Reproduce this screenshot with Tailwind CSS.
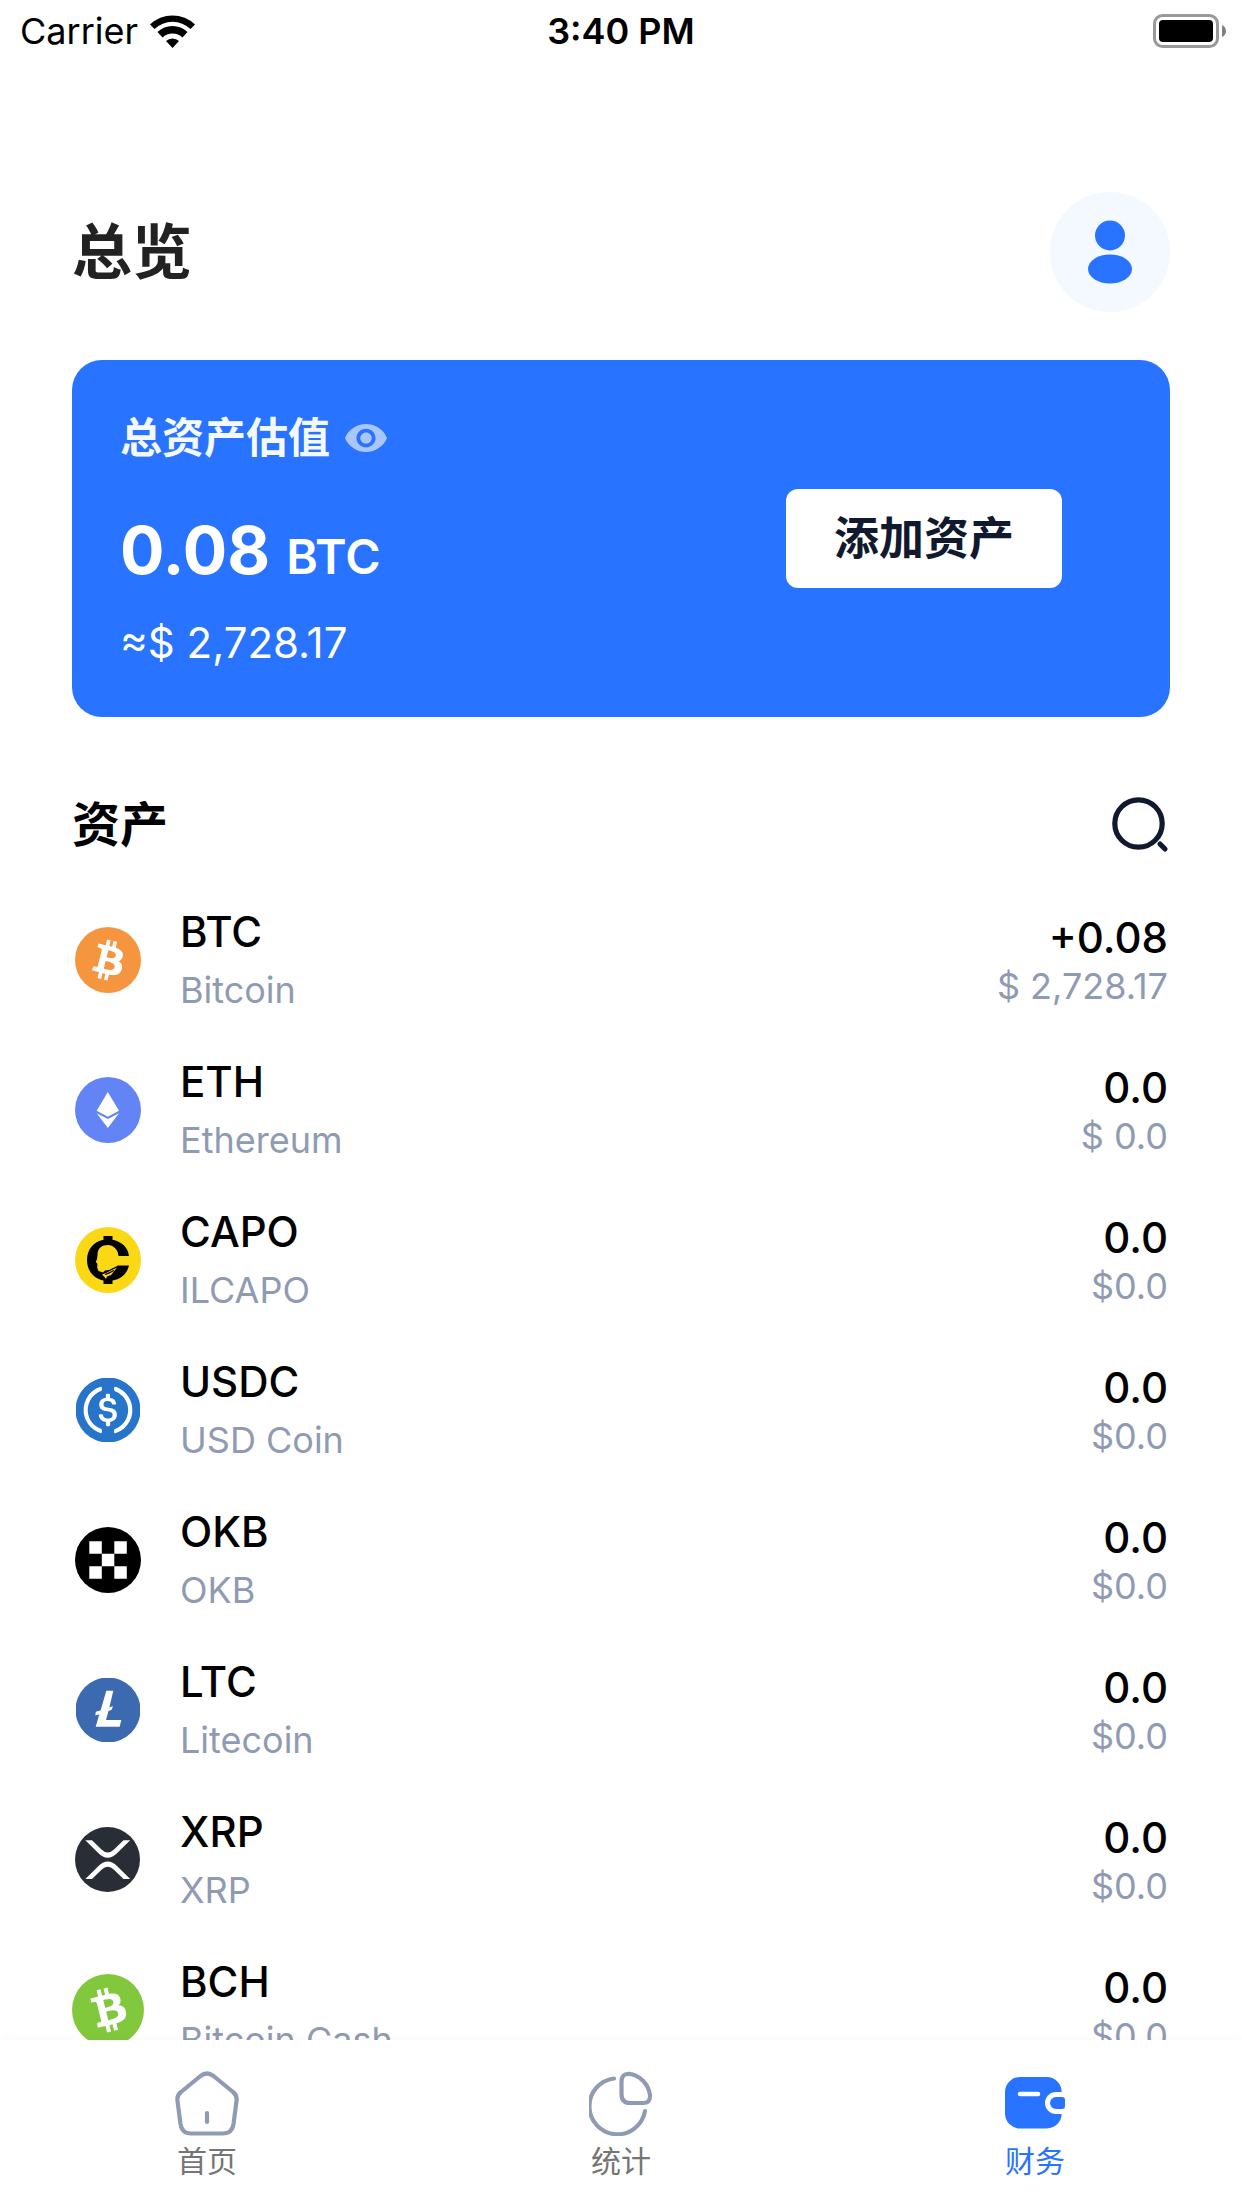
<!DOCTYPE html>
<html lang="zh-CN">
<head>
<meta charset="utf-8">
<meta name="viewport" content="width=device-width, initial-scale=1">
<title>总览</title>
<script src="https://cdn.jsdelivr.net/npm/@tailwindcss/browser@4"></script>
</head>
<body class="flex h-screen flex-col bg-white font-[Inter,'Noto_Sans_CJK_SC',sans-serif] text-black">

<!-- Status bar -->
<div class="grid h-[60px] shrink-0 grid-cols-3 items-center px-5 pt-0.5 text-4xl">
  <div class="flex items-center gap-3">
    <span>Carrier</span>
    <svg class="h-[33px] w-[45px]" viewBox="0 0 45 33" aria-hidden="true">
      <path d="M0 9.500A32.500 32.500 0 0 1 45 9.500L40.500 14A26 26 0 0 0 4.500 14Z"/>
      <path d="M7.500 17A21.500 21.500 0 0 1 37.500 17L32.500 22.500A14.500 14.500 0 0 0 12.500 22.500Z"/>
      <path d="M16 26A9.500 9.500 0 0 1 29 26L22.500 33Z"/>
    </svg>
  </div>
  <div class="text-center font-semibold">3:40 PM</div>
  <svg class="-mr-1 h-[34px] w-[73px] justify-self-end" viewBox="0 0 73 34" aria-hidden="true">
    <rect x="1.500" y="1.500" width="63" height="31" rx="8" fill="none" stroke="#999" stroke-width="3"/>
    <rect x="6" y="6" width="54" height="22" rx="4"/>
    <path d="M69 11Q73 13 73 17T69 23Z" fill="#808080"/>
  </svg>
</div>

<main class="min-h-0 flex-1 overflow-y-auto px-18 pt-33 [scrollbar-width:none]">
  <header class="flex items-center justify-between">
    <h1 class="text-6xl font-semibold text-[#222]">总览</h1>
    <button type="button" aria-label="个人中心" class="grid size-30 place-items-center rounded-full bg-[#f4f8ff]">
      <svg class="h-16 w-11" viewBox="0 0 44 64" fill="#2873ff" aria-hidden="true">
        <circle cx="22" cy="15.500" r="15"/>
        <ellipse cx="22" cy="49" rx="22" ry="14.500"/>
      </svg>
    </button>
  </header>

  <section class="mt-12 flex items-center justify-between rounded-[30px] bg-[#2873ff] py-12 pr-27 pl-12 text-white">
    <div>
      <div class="flex items-center gap-[15px]">
        <h2 class="text-[42px] leading-[60px] font-semibold text-[#f4f8ff]">总资产估值</h2>
        <button type="button" aria-label="隐藏资产">
          <svg class="h-7 w-[42px]" viewBox="1 4.500 22 15" preserveAspectRatio="none" fill="#a9c7ff" aria-hidden="true">
            <path d="M12 4.500C7 4.500 2.730 7.610 1 12c1.730 4.390 6 7.500 11 7.500s9.270-3.110 11-7.500c-1.730-4.390-6-7.500-11-7.500zM12 17c-2.760 0-5-2.240-5-5s2.240-5 5-5 5 2.240 5 5-2.240 5-5 5zm0-8c-1.660 0-3 1.340-3 3s1.340 3 3 3 3-1.340 3-3-1.340-3-3-3z"/>
          </svg>
        </button>
      </div>
      <p class="mt-10 flex items-baseline gap-4 font-semibold">
        <span class="text-[66px] leading-[84px] font-bold">0.08</span>
        <span class="text-5xl">BTC</span>
      </p>
      <p class="mt-6 text-[42px] leading-[53px]">≈$ 2,728.17</p>
    </div>
    <button type="button" class="rounded-xl bg-white px-12 py-5 text-[45px] leading-[59px] font-semibold text-[#11192e]">添加资产</button>
  </section>

  <section class="mt-12">
    <div class="flex h-30 items-center justify-between">
      <h2 class="text-5xl font-semibold">资产</h2>
      <button type="button" aria-label="搜索">
        <svg class="h-14 w-[58px]" viewBox="0 0 58 56" fill="none" stroke="#11192e" stroke-width="5.200" stroke-linecap="round" aria-hidden="true">
          <circle cx="26.500" cy="26.500" r="23.700"/>
          <path d="M48 47L53 52"/>
        </svg>
      </button>
    </div>

    <ul>
      <li class="flex h-[150px] items-center">
        <svg class="mx-[3px] size-[66px]" viewBox="0 0 32 32" aria-hidden="true">
          <circle cx="16" cy="16" r="16" fill="#f69540"/>
          <path fill="#fff" d="M23.189 14.020c.314-2.096-1.283-3.223-3.465-3.975l.708-2.840-1.728-.430-.690 2.765c-.454-.114-.920-.220-1.385-.326l.695-2.783L15.596 6l-.708 2.839c-.376-.086-.746-.170-1.104-.260l.002-.009-2.384-.595-.460 1.846s1.283.294 1.256.312c.700.175.826.638.805 1.006l-.806 3.235c.048.012.110.030.180.057l-.183-.045-1.130 4.532c-.086.212-.303.531-.793.410.018.025-1.256-.313-1.256-.313l-.858 1.978 2.250.561c.418.105.828.215 1.231.318l-.715 2.872 1.727.430.708-2.840c.472.127.930.245 1.378.357l-.706 2.828 1.728.430.715-2.866c2.948.558 5.164.333 6.097-2.333.752-2.146-.037-3.385-1.588-4.192 1.130-.260 1.980-1.003 2.207-2.538zm-3.950 5.538c-.533 2.147-4.148.986-5.320.695l.950-3.805c1.172.293 4.929.872 4.370 3.110zm.535-5.569c-.487 1.953-3.495.960-4.470.717l.860-3.450c.975.243 4.118.696 3.610 2.733z"/>
        </svg>
        <div class="ml-9 flex-1">
          <h3 class="text-[42px] leading-[60px] font-medium">BTC</h3>
          <p class="text-4xl leading-[56px] text-[#8f9bb3]">Bitcoin</p>
        </div>
        <div class="pt-1 pr-0.5 text-right">
          <p class="text-[42px] leading-[48px] font-medium">+0.08</p>
          <p class="text-4xl leading-[48px] text-[#8f9bb3]">$ 2,728.17</p>
        </div>
      </li>

      <li class="flex h-[150px] items-center">
        <svg class="mx-[3px] size-[66px]" viewBox="0 0 66 66" aria-hidden="true">
          <circle cx="33" cy="33" r="33" fill="#6284f5"/>
          <path fill="#fff" d="M32.800 15L44 33.700 32.800 39.700 21.700 33.700ZM21.700 36.300L32.800 41.900 44 36.300 32.800 51Z"/>
        </svg>
        <div class="ml-9 flex-1">
          <h3 class="text-[42px] leading-[60px] font-medium">ETH</h3>
          <p class="text-4xl leading-[56px] text-[#8f9bb3]">Ethereum</p>
        </div>
        <div class="pt-1 pr-0.5 text-right">
          <p class="text-[42px] leading-[48px] font-medium">0.0</p>
          <p class="text-4xl leading-[48px] text-[#8f9bb3]">$ 0.0</p>
        </div>
      </li>

      <li class="flex h-[150px] items-center">
        <svg class="mx-[3px] size-[66px]" viewBox="0 0 66 66" aria-hidden="true">
          <circle cx="33" cy="33" r="33" fill="#fad816"/>
          <path d="M28.500 9H37.500V12.800C46 14.500 53 20 54 29H43.500C43 22 38 18 33 18C27 18 22.500 21 22.500 28L22 32 20.800 35 22.300 36.500V41L23.500 44 28 45.500 30 43.500 34 43 43 38.500H54C52 47 46 52 37.500 53.500V57H28.500V53.500C18 51.500 12 43 12 33S18.500 14.500 28.500 12.800Z"/>
          <path fill="#fad816" d="M27 47.500L31 46 42 40.500 36 48 32 49.500 31 52 29.500 50Z"/>
          <path d="M30 47.500L39 43.500 33.500 46.500Z" stroke="#000" stroke-width=".8"/>
        </svg>
        <div class="ml-9 flex-1">
          <h3 class="text-[42px] leading-[60px] font-medium">CAPO</h3>
          <p class="text-4xl leading-[56px] text-[#8f9bb3]">ILCAPO</p>
        </div>
        <div class="pt-1 pr-0.5 text-right">
          <p class="text-[42px] leading-[48px] font-medium">0.0</p>
          <p class="text-4xl leading-[48px] text-[#8f9bb3]">$0.0</p>
        </div>
      </li>

      <li class="flex h-[150px] items-center">
        <svg class="mx-1 size-16" viewBox="1 1 64 64" aria-hidden="true">
          <circle cx="33" cy="33" r="32.500" fill="#2775ca"/>
          <path fill="#fff" transform="translate(33 33) scale(2.220) translate(-16 -16)" d="M20.022 18.124c0-2.124-1.280-2.852-3.840-3.156-1.828-.243-2.193-.728-2.193-1.578 0-.850.610-1.396 1.828-1.396 1.097 0 1.707.364 2.011 1.275a.458.458 0 00.427.303h.975a.416.416 0 00.427-.425v-.060a3.040 3.040 0 00-2.743-2.489V9.142c0-.243-.183-.425-.487-.486h-.915c-.243 0-.426.182-.487.486v1.396c-1.829.242-2.986 1.456-2.986 2.974 0 2.002 1.218 2.791 3.778 3.095 1.707.303 2.255.668 2.255 1.639 0 .970-.853 1.638-2.011 1.638-1.585 0-2.133-.667-2.316-1.578-.060-.242-.244-.364-.427-.364h-1.036a.416.416 0 00-.426.425v.060c.243 1.518 1.219 2.610 3.230 2.914v1.457c0 .242.183.425.487.485h.915c.243 0 .426-.182.487-.485V21.340c1.829-.303 3.047-1.578 3.047-3.217zM12.892 24.497c-4.754-1.700-7.192-6.980-5.424-11.653.914-2.550 2.925-4.491 5.424-5.402.244-.121.365-.303.365-.607v-.850c0-.242-.121-.424-.365-.485-.061 0-.183 0-.244.060a10.895 10.895 0 00-7.130 13.717c1.096 3.400 3.717 6.010 7.130 7.102.244.121.488 0 .548-.243.061-.060.061-.122.061-.243v-.850c0-.182-.182-.424-.365-.546zm6.460-18.936c-.244-.122-.488 0-.548.242-.061.061-.061.122-.061.243v.850c0 .243.182.485.365.607 4.754 1.700 7.192 6.980 5.424 11.653-.914 2.550-2.925 4.491-5.424 5.402-.244.121-.365.303-.365.607v.850c0 .242.121.424.365.485.061 0 .183 0 .244-.060a10.895 10.895 0 007.130-13.717c-1.096-3.460-3.778-6.070-7.130-7.162z"/>
        </svg>
        <div class="ml-9 flex-1">
          <h3 class="text-[42px] leading-[60px] font-medium">USDC</h3>
          <p class="text-4xl leading-[56px] text-[#8f9bb3]">USD Coin</p>
        </div>
        <div class="pt-1 pr-0.5 text-right">
          <p class="text-[42px] leading-[48px] font-medium">0.0</p>
          <p class="text-4xl leading-[48px] text-[#8f9bb3]">$0.0</p>
        </div>
      </li>

      <li class="flex h-[150px] items-center">
        <svg class="mx-[3px] size-[66px]" viewBox="0 0 66 66" aria-hidden="true">
          <circle cx="33" cy="33" r="33"/>
          <path fill="#fff" d="M14.300 14.300h12.500v12.500h-12.500zM39.300 14.300h12.500v12.500h-12.500zM26.800 26.800h12.500v12.500h-12.500zM14.300 39.300h12.500v12.500h-12.500zM39.300 39.300h12.500v12.500h-12.500z"/>
        </svg>
        <div class="ml-9 flex-1">
          <h3 class="text-[42px] leading-[60px] font-medium">OKB</h3>
          <p class="text-4xl leading-[56px] text-[#8f9bb3]">OKB</p>
        </div>
        <div class="pt-1 pr-0.5 text-right">
          <p class="text-[42px] leading-[48px] font-medium">0.0</p>
          <p class="text-4xl leading-[48px] text-[#8f9bb3]">$0.0</p>
        </div>
      </li>

      <li class="flex h-[150px] items-center">
        <svg class="mx-1 size-16" viewBox="1 1 64 64" aria-hidden="true">
          <circle cx="33" cy="33" r="32.500" fill="#3b6ab0"/>
          <path fill="#fff" d="M31.300 13.700H38.300L34.400 30.300 38 29.200 36.700 32.700 33.500 34 31 43H46.300L44.700 49.700H20.700L24.300 37.200 20.300 38.500 20.800 34.800 25.700 33.300Z"/>
        </svg>
        <div class="ml-9 flex-1">
          <h3 class="text-[42px] leading-[60px] font-medium">LTC</h3>
          <p class="text-4xl leading-[56px] text-[#8f9bb3]">Litecoin</p>
        </div>
        <div class="pt-1 pr-0.5 text-right">
          <p class="text-[42px] leading-[48px] font-medium">0.0</p>
          <p class="text-4xl leading-[48px] text-[#8f9bb3]">$0.0</p>
        </div>
      </li>

      <li class="flex h-[150px] items-center">
        <svg class="mx-[3px] size-[66px]" viewBox="0 0 66 66" aria-hidden="true">
          <circle cx="32.500" cy="32.500" r="32.500" fill="#282d36"/>
          <path fill="#fff" d="M10.300 13.300H17L26.500 22.500Q32.700 28.500 39 22.500L48.500 13.300H55.200L42.500 25.800Q32.700 35.800 23 25.800ZM10.300 52H17L26.500 42.800Q32.700 36.800 39 42.800L48.500 52H55.200L42.500 39.500Q32.700 29.500 23 39.500Z"/>
        </svg>
        <div class="ml-9 flex-1">
          <h3 class="text-[42px] leading-[60px] font-medium">XRP</h3>
          <p class="text-4xl leading-[56px] text-[#8f9bb3]">XRP</p>
        </div>
        <div class="pt-1 pr-0.5 text-right">
          <p class="text-[42px] leading-[48px] font-medium">0.0</p>
          <p class="text-4xl leading-[48px] text-[#8f9bb3]">$0.0</p>
        </div>
      </li>

      <li class="flex h-[150px] items-center">
        <svg class="size-18" viewBox="0 0 32 32" aria-hidden="true">
          <circle cx="16" cy="16" r="16" fill="#82c83c"/>
          <path fill="#fff" transform="rotate(2 16 16)" d="M21.207 10.534c-.776-1.972-2.722-2.150-4.988-1.710l-.807-2.813-1.712.491.786 2.740c-.450.128-.908.270-1.363.410l-.790-2.758-1.711.490.805 2.813c-.368.114-.730.226-1.085.328l-.003-.010-2.362.677.525 1.830s1.258-.388 1.243-.358c.694-.199 1.035.139 1.200.468l.920 3.204c.047-.013.110-.029.184-.040l-.181.052 1.287 4.490c.032.227.004.612-.480.752.027.013-1.246.356-1.246.356l.247 2.143 2.228-.640c.415-.117.825-.227 1.226-.340l.817 2.845 1.710-.490-.807-2.815a65.740 65.740 0 001.372-.380l.802 2.803 1.713-.491-.814-2.840c2.831-.991 4.638-2.294 4.113-5.070-.422-2.234-1.724-2.912-3.471-2.836.848-.790 1.213-1.858.642-3.300zm-.650 6.770c.610 2.127-3.100 2.929-4.260 3.263l-1.081-3.770c1.160-.333 4.704-1.710 5.340.508zm-2.322-5.090c.554 1.935-2.547 2.580-3.514 2.857l-.980-3.419c.966-.277 3.915-1.455 4.494.563z"/>
        </svg>
        <div class="ml-9 flex-1">
          <h3 class="text-[42px] leading-[60px] font-medium">BCH</h3>
          <p class="text-4xl leading-[56px] text-[#8f9bb3]">Bitcoin Cash</p>
        </div>
        <div class="pt-1 pr-0.5 text-right">
          <p class="text-[42px] leading-[48px] font-medium">0.0</p>
          <p class="text-4xl leading-[48px] text-[#8f9bb3]">$0.0</p>
        </div>
      </li>
    </ul>
  </section>
</main>

<!-- Tab bar -->
<nav class="grid h-42 shrink-0 grid-cols-3 bg-white text-3xl leading-[42px] text-[#757575] shadow-[0_0_12px_rgba(0,0,0,0.04)]">
  <a href="#home" class="flex flex-col items-center pt-[30px]">
    <svg class="h-[66px] w-16" viewBox="0 0 64 66" fill="none" stroke="#8f9bb3" stroke-width="4.200" stroke-linecap="round" stroke-linejoin="round" aria-hidden="true">
      <path d="M25.500 6Q32 1 38.500 6L58 22Q62.500 25.500 61.500 31L58.500 54Q57 63.500 48 63.500H16Q7 63.500 5.500 54L2.500 31Q1.500 25.500 6 22Z"/>
      <path d="M32 43V52"/>
    </svg>
    <span class="mt-1">首页</span>
  </a>
  <a href="#stats" class="flex flex-col items-center pt-[30px]">
    <svg class="h-[66px] w-16" viewBox="0 0 64 66" fill="none" stroke="#8f9bb3" stroke-width="4.200" stroke-linecap="round" stroke-linejoin="round" aria-hidden="true">
      <path d="M25 8.500A28 28 0 1 0 56 41"/>
      <path d="M32.500 12V24Q32.500 33 41 33H54.500Q61.500 33 61 25C59.500 14 50 4.500 40 3.800Q32.500 3.500 32.500 12Z"/>
    </svg>
    <span class="mt-1">统计</span>
  </a>
  <a href="#finance" aria-current="page" class="flex flex-col items-center pt-[30px] text-[#2873ff]">
    <svg class="h-[66px] w-[60px]" viewBox="0 0 60 66" aria-hidden="true">
      <rect y="7" width="56.700" height="51.500" rx="15" fill="#2873ff"/>
      <path d="M15 24H33" stroke="#fff" stroke-width="4.500" stroke-linecap="round"/>
      <path fill="#fff" d="M60 22H51A11 11 0 0 0 51 44H60Z"/>
      <path fill="#2873ff" d="M51 27H57Q60 27 60 30V36Q60 39 57 39H51A6 6 0 0 1 51 27Z"/>
    </svg>
    <span class="mt-1">财务</span>
  </a>
</nav>
</body>
</html>
